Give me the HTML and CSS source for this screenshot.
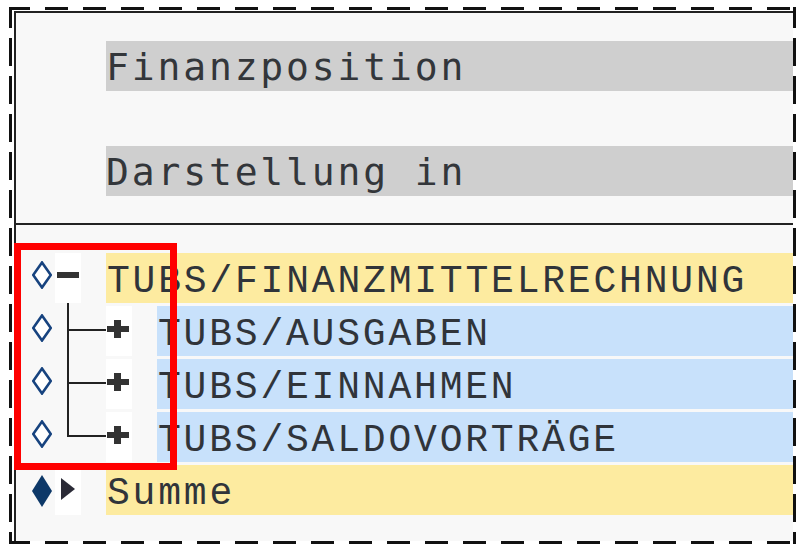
FILE: index.html
```html
<!DOCTYPE html>
<html lang="de">
<head>
<meta charset="utf-8">
<title>Finanzposition</title>
<link rel="stylesheet" href="styles.css">
</head>
<body>
<div class="frame">
  <div class="panel">
    <section class="header">
      <div class="field">Finanzposition</div>
      <div class="field">Darstellung in</div>
    </section>
    <section class="tree">
      <div class="row">
        <span class="mark"><svg width="20" height="28" viewBox="0 0 20 28"><polygon points="10,1.5 18.8,14 10,26.5 1.2,14" fill="#fff" stroke="#17437f" stroke-width="2.6"/></svg></span>
        <span class="toggle"><svg width="26" height="50" viewBox="0 0 26 50"><rect x="2" y="19" width="22" height="6" fill="#333"/></svg></span>
        <span class="label yellow">TUBS/FINANZMITTELRECHNUNG</span>
      </div>
      <div class="row">
        <span class="mark"><svg width="20" height="28" viewBox="0 0 20 28"><polygon points="10,1.5 18.8,14 10,26.5 1.2,14" fill="#fff" stroke="#17437f" stroke-width="2.6"/></svg></span>
        <span class="indent"></span>
        <span class="toggle"><svg width="26" height="50" viewBox="0 0 26 50"><rect x="1" y="20" width="22" height="6" fill="#333"/><rect x="8" y="14" width="7" height="18" fill="#333"/></svg></span>
        <span class="label blue">TUBS/AUSGABEN</span>
      </div>
      <div class="row">
        <span class="mark"><svg width="20" height="28" viewBox="0 0 20 28"><polygon points="10,1.5 18.8,14 10,26.5 1.2,14" fill="#fff" stroke="#17437f" stroke-width="2.6"/></svg></span>
        <span class="indent"></span>
        <span class="toggle"><svg width="26" height="50" viewBox="0 0 26 50"><rect x="1" y="20" width="22" height="6" fill="#333"/><rect x="8" y="14" width="7" height="18" fill="#333"/></svg></span>
        <span class="label blue">TUBS/EINNAHMEN</span>
      </div>
      <div class="row">
        <span class="mark"><svg width="20" height="28" viewBox="0 0 20 28"><polygon points="10,1.5 18.8,14 10,26.5 1.2,14" fill="#fff" stroke="#17437f" stroke-width="2.6"/></svg></span>
        <span class="indent last"></span>
        <span class="toggle"><svg width="26" height="50" viewBox="0 0 26 50"><rect x="1" y="20" width="22" height="6" fill="#333"/><rect x="8" y="14" width="7" height="18" fill="#333"/></svg></span>
        <span class="label blue">TUBS/SALDOVORTRÄGE</span>
      </div>
      <div class="row">
        <span class="mark sum"><svg width="20" height="32" viewBox="0 0 20 32"><polygon points="10,0 20,16 10,32 0,16" fill="#0d3868"/></svg></span>
        <span class="toggle"><svg width="26" height="50" viewBox="0 0 26 50"><polygon points="6,13 20,24 6,35" fill="#2a2a36"/></svg></span>
        <span class="label yellow">Summe</span>
      </div>
    </section>
  </div>
  <div class="highlight"></div>
</div>
</body>
</html>
```
FILE: styles.css
```css
html, body {
  margin: 0;
  padding: 0;
  background: #ffffff;
}

.frame {
  position: relative;
  box-sizing: border-box;
  width: 787px;
  height: 537px;
  margin: 7px 0 0 9px;
  padding: 4px 3px 3px 5px;
  background:
    repeating-linear-gradient(to right, #111 0 21px, transparent 21px 36px, #111 36px 38px) left top / 100% 3px no-repeat,
    repeating-linear-gradient(to right, #111 0 21px, transparent 21px 36px, #111 36px 38px) left bottom / 100% 3px no-repeat,
    repeating-linear-gradient(to bottom, #111 0 21px, transparent 21px 31px, #111 31px 38px) left top / 3px 100% no-repeat,
    repeating-linear-gradient(to bottom, #111 0 21px, transparent 21px 31px, #111 31px 38px) right top / 3px 100% no-repeat;
}

.panel {
  box-sizing: border-box;
  width: 100%;
  height: 100%;
  overflow: hidden;
  background: #f8f8f8;
  border-top: 2px solid #222;
  border-left: 2px solid #222;
}

.header {
  display: flex;
  flex-direction: column;
  gap: 55px;
  padding: 28px 0 27px 90px;
  border-bottom: 2px solid #222;
}

.field {
  box-sizing: border-box;
  height: 50px;
  padding-top: 4px;
  line-height: 44px;
  background: #cfcfcf;
  color: #33363a;
  font-family: "DejaVu Sans Mono", monospace;
  font-size: 38px;
  letter-spacing: 2.85px;
  white-space: nowrap;
}

.tree {
  display: flex;
  flex-direction: column;
  gap: 3px;
  padding-top: 28px;
}

.row {
  display: flex;
  height: 50px;
}

.mark {
  flex: none;
  box-sizing: border-box;
  width: 39px;
  padding: 8px 0 0 16px;
}

.mark.sum {
  padding-top: 10px;
}

.mark svg,
.toggle svg {
  display: block;
}

.toggle {
  flex: none;
  width: 26px;
  height: 50px;
  margin-right: 25px;
  background: #ffffff;
}

.indent {
  flex: none;
  position: relative;
  width: 51px;
}

.indent::before {
  content: "";
  position: absolute;
  left: 12px;
  top: -3px;
  bottom: 0;
  width: 2px;
  background: #222;
}

.indent.last::before {
  bottom: 25px;
}

.indent::after {
  content: "";
  position: absolute;
  left: 12px;
  right: 0;
  top: 23px;
  height: 2px;
  background: #222;
}

.label {
  flex: 1;
  box-sizing: border-box;
  height: 50px;
  padding: 8px 0 0 1px;
  line-height: 42px;
  color: #30343a;
  font-family: "Liberation Mono", monospace;
  font-size: 38px;
  letter-spacing: 2.8px;
  white-space: nowrap;
}

.yellow {
  background: #fdeba0;
}

.blue {
  background: #c8e1fb;
}

.highlight {
  position: absolute;
  left: 5px;
  top: 236px;
  box-sizing: border-box;
  width: 163px;
  height: 227px;
  border: 7px solid #ff0000;
}
```
